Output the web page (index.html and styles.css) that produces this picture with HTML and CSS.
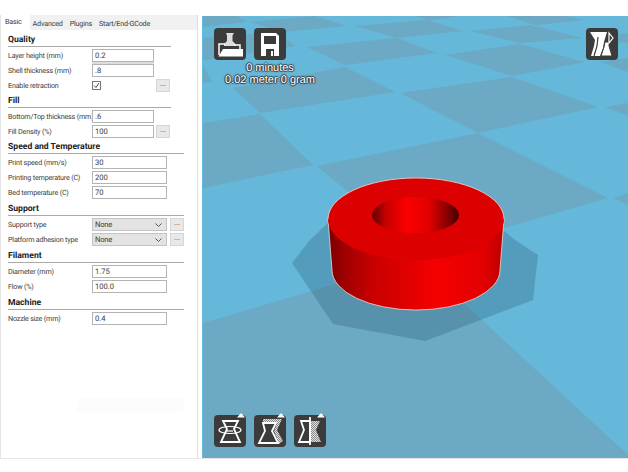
FILE: index.html
```html
<!DOCTYPE html>
<html lang="en">
<head>
    <meta charset="UTF-8">
    <title>Cura</title>
    <link rel="stylesheet" href="styles.css">
</head>
<body>
    <div class="app">
        <div class="panel">
            <div class="tabs">
                <span class="tab active">Basic</span>
                <span class="tab">Advanced</span>
                <span class="tab">Plugins</span>
                <span class="tab">Start/End-GCode</span>
            </div>
            <div class="settings">
                <div class="section">
                    <h2>Quality</h2>
                    <div class="row"><label>Layer height (mm)</label><input class="field band" value="0.2"></div>
                    <div class="row"><label>Shell thickness (mm)</label><input class="field" value=".8"></div>
                    <div class="row"><label>Enable retraction</label><span class="check-cell"><svg class="check" viewBox="0 0 9 9"><rect x=".5" y=".5" width="8" height="8" fill="#fff" stroke="#777"/><path d="M2 4.5l2 2 3-4.5" fill="none" stroke="#444"/></svg></span><button class="more">...</button></div>
                </div>
                <div class="section">
                    <h2>Fill</h2>
                    <div class="row"><label>Bottom/Top thickness (mm)</label><input class="field" value=".6"></div>
                    <div class="row"><label>Fill Density (%)</label><input class="field" value="100"><button class="more">...</button></div>
                </div>
                <div class="section wide">
                    <h2>Speed and Temperature</h2>
                    <div class="row"><label>Print speed (mm/s)</label><input class="field" value="30"></div>
                    <div class="row"><label>Printing temperature (C)</label><input class="field" value="200"></div>
                    <div class="row"><label>Bed temperature (C)</label><input class="field" value="70"></div>
                </div>
                <div class="section wide">
                    <h2>Support</h2>
                    <div class="row"><label>Support type</label><span class="field select">None<svg viewBox="0 0 7 4"><path d="M.5 .5l3 3 3-3" fill="none" stroke="#555"/></svg></span><button class="more">...</button></div>
                    <div class="row"><label>Platform adhesion type</label><span class="field select">None<svg viewBox="0 0 7 4"><path d="M.5 .5l3 3 3-3" fill="none" stroke="#555"/></svg></span><button class="more">...</button></div>
                </div>
                <div class="section wide">
                    <h2>Filament</h2>
                    <div class="row"><label>Diameter (mm)</label><input class="field" value="1.75"></div>
                    <div class="row"><label>Flow (%)</label><input class="field" value="100.0"></div>
                </div>
                <div class="section wide">
                    <h2>Machine</h2>
                    <div class="row"><label>Nozzle size (mm)</label><input class="field" value="0.4"></div>
                </div>
            </div>
            <div class="ghost"></div>
        </div>

        <div class="viewport">
            <svg class="scene" viewBox="202 16 426 442">
                <defs>
                    <linearGradient id="side">
                        <stop offset="0" stop-color="#7a0000"/>
                        <stop offset=".1" stop-color="#a00000"/>
                        <stop offset=".25" stop-color="#c80000"/>
                        <stop offset=".62" stop-color="#f60000"/>
                        <stop offset=".88" stop-color="#e40000"/>
                        <stop offset="1" stop-color="#b80000"/>
                    </linearGradient>
                    <linearGradient id="hole">
                        <stop offset="0" stop-color="#600000"/>
                        <stop offset=".16" stop-color="#c80000"/>
                        <stop offset=".4" stop-color="#fc0000"/>
                        <stop offset=".66" stop-color="#e00000"/>
                        <stop offset=".88" stop-color="#800000"/>
                        <stop offset="1" stop-color="#400000"/>
                    </linearGradient>
                    <pattern id="hatch" width="2" height="2" patternUnits="userSpaceOnUse">
                        <rect width="2" height="2" fill="#8a8a8a"/>
                        <rect width="1" height="1" fill="#e0e0e0"/>
                        <rect x="1" y="1" width="1" height="1" fill="#e0e0e0"/>
                    </pattern>
                </defs>
                <g fill="#6ba9c4">
                    <polygon points="203,16 237,16 247,22 203,27"/>
                    <polygon points="250,22 315,16 347,26 283,32"/>
                    <polygon points="415,16 460,16 440,19 427,20"/>
                    <polygon points="507,16 565,16 585,20 535,25"/>
                    <polygon points="203,38 277,32 295,46 203,60"/>
                    <polygon points="355,26 427,20 463,31 397,38"/>
                    <polygon points="470,31 530,25 582,38 520,43"/>
                    <polygon points="588,38 628,33 628,43"/>
                    <polygon points="307,47 397,38 437,53 345,65"/>
                    <polygon points="445,55 520,44 585,62 512,76"/>
                    <polygon points="600,62 628,58 628,72"/>
                    <polygon points="203,65 212,82 203,83"/>
                    <polygon points="233,88 345,67 395,92 260,113"/>
                    <polygon points="400,93 512,77 598,107 478,133"/>
                    <polygon points="605,107 628,103 628,116"/>
                    <polygon points="203,123 260,114 313,165 203,188"/>
                    <polygon points="317,166 478,133 608,198 420,252"/>
                    <polygon points="613,198 628,193 628,205"/>
                    <polygon points="203,323 417,260 628,455 628,458 203,458"/>
                </g>
                <polygon points="292,263 310,240 328,223 503,230 515,240 538,255 533,300 425,341 333,324" fill="#2f5f78" opacity=".32"/>
                <path d="M328 219L332 270A84 40 0 0 0 500 270L504 219Z" fill="url(#side)" stroke="#f6d8d0" stroke-width=".8"/>
                <ellipse cx="416" cy="219" rx="88" ry="41" fill="#dc0000"/>
                <path d="M328 219A88 41 0 0 1 504 219" fill="none" stroke="#f6d8d0" stroke-width=".8"/>
                <ellipse cx="415.5" cy="215" rx="43.5" ry="18" fill="url(#hole)"/>
            </svg>

            <div class="toolbar top-left">
                <svg class="tool" viewBox="0 0 32 32"><rect width="32" height="32" rx="4" fill="#3b3b3b"/><path d="M12 5h8l-1.500 2.500v5.500l3 3v2H10v-2l3-3V7.500z" fill="#ddd"/><path d="M5 27V16h6M20 17h6v4" fill="none" stroke="#fff" stroke-width="1.500"/><path d="M4.500 28.500L9 21h20v7.500z" fill="#fff"/></svg>
                <svg class="tool" viewBox="0 0 32 32"><rect width="32" height="32" rx="4" fill="#3b3b3b"/><path d="M7 5h15l3 3v20H7z" fill="#fff"/><path d="M10 8h12v8H10zM12 21h8v7h-8z" fill="#3b3b3b"/><path d="M17 23h2v5h-2z" fill="#fff"/></svg>
            </div>
            <div class="print-info">
                <div>0 minutes</div>
                <div>0.02 meter 0 gram</div>
            </div>
            <div class="toolbar top-right">
                <svg class="tool" viewBox="0 0 32 32"><rect width="32" height="32" rx="4" fill="#3b3b3b"/><path d="M4 4h17l-3 10-1 6-3 8H5l3-10 1-6z" fill="#fff"/><path d="M12 9l-1 9-3 10" fill="none" stroke="#3b3b3b" stroke-width="1.200"/><path d="M19 14h4v4l3 10H15l3-9z" fill="#fff" stroke="#3b3b3b"/><path d="M23 5l4 5-4 5z" fill="none" stroke="#fff" stroke-width="1.200"/></svg>
            </div>
            <div class="toolbar bottom-left">
                <svg class="tool" viewBox="0 0 32 32"><rect width="32" height="32" rx="4" fill="#3b3b3b"/><path d="M23 2.500l3.500-4h1l3.500 4z" fill="#fff"/><path d="M9 6h15l-4 8 6 13H7l6-13z" fill="none" stroke="#fff" stroke-width="1.800"/><ellipse cx="16" cy="15" rx="11" ry="3.500" fill="none" stroke="#fff" stroke-width="1.200"/><path d="M13 16h6" stroke="#fff" stroke-width="1.200"/></svg>
                <svg class="tool" viewBox="0 0 32 32"><rect width="32" height="32" rx="4" fill="#3b3b3b"/><path d="M23 2.500l3.500-4h1l3.500 4z" fill="#fff"/><path d="M9 4h19l-5 11 6 11-4 3-5-13 3-8H9z" fill="url(#hatch)"/><path d="M9 8h13l-4 8 6 12H5l6-12z" fill="none" stroke="#fff" stroke-width="1.800"/></svg>
                <svg class="tool" viewBox="0 0 32 32"><rect width="32" height="32" rx="4" fill="#3b3b3b"/><path d="M23 2.500l3.500-4h1l3.500 4z" fill="#fff"/><path d="M16 6h10l-4 9 5 12H16z" fill="url(#hatch)"/><path d="M7 6h9v21H5l5-12z" fill="none" stroke="#fff" stroke-width="1.800"/><path d="M16 2v28" stroke="#fff" stroke-width="1.800"/></svg>
            </div>
        </div>
    </div>
</body>
</html>
```
FILE: styles.css
```css
html, body {
    margin: 0;
    padding: 0;
    background: #fff;
}
body {
    font-family: Roboto, sans-serif;
    font-size: 7.2px;
    letter-spacing: -.2px;
    color: #3c3c3c;
    height: 472px;
    overflow: hidden;
    text-rendering: geometricPrecision;
}
.app {
    display: flex;
    height: 443px;
    margin-top: 15px;
    border-bottom: 1px solid #e6e6e6;
}
.panel {
    position: relative;
    width: 198px;
    background: #fff;
    border-left: 1px solid #e4e4e4;
    border-right: 1px solid #f0d8da;
    box-sizing: border-box;
}
.tabs {
    display: flex;
    height: 15px;
    background: #f1f1f1;
}
.tab {
    padding: 4px 3px 0;
    margin-right: 1px;
    line-height: 10px;
}
.tab.active {
    background: #fff;
    margin-right: 0;
    padding: 2px 8px 0 4px;
}
.settings {
    padding: 4px 0 0 7px;
}
.section {
    width: 163px;
    margin-top: 2px;
}
.section:first-child {
    margin-top: 0;
}
.wide {
    width: 176px;
}
.wide + .wide {
    margin-top: 3px;
}
h2 {
    margin: 0 0 1px;
    height: 12px;
    line-height: 13px;
    font-size: 8.6px;
    letter-spacing: 0;
    font-weight: 700;
    color: #222;
    border-bottom: 1px solid #aaa;
}
.row {
    display: flex;
    align-items: flex-start;
    height: 15px;
    padding-top: 1px;
    box-sizing: border-box;
}
.row label {
    width: 84px;
    flex: none;
    line-height: 13px;
    white-space: nowrap;
}
.field {
    width: 62px;
    height: 13px;
    padding: 0 2px;
    border: 1px solid #b4b4b4;
    box-sizing: border-box;
    font-family: inherit;
    font-size: 7.6px;
    color: #3c3c3c;
    background: #fff;
    outline: none;
    text-rendering: geometricPrecision;
}
.wide .field {
    width: 75px;
}
.band {
    box-shadow: 0 2px 0 #ddd;
}
.select {
    display: flex;
    align-items: center;
    justify-content: space-between;
    background: #e3e3e3;
    border-color: #c4c4c4;
    padding-right: 4px;
}
.select svg {
    width: 7px;
    height: 4px;
}
.check-cell {
    width: 62px;
    height: 13px;
    display: flex;
    align-items: center;
}
.check {
    width: 9px;
    height: 9px;
}
.more {
    width: 14px;
    height: 13px;
    margin-left: 2px;
    padding: 0 0 3px;
    border: 1px solid #d6d6d6;
    background: #e8e8e8;
    font-size: 7px;
    line-height: 8px;
    color: #333;
}
.wide .more {
    margin-left: 3px;
}
.ghost {
    position: absolute;
    left: 76px;
    top: 383px;
    width: 107px;
    height: 14px;
    background: #fcfcfd;
    border-radius: 3px;
}
.viewport {
    position: relative;
    flex: 1;
    margin-left: 4px;
    margin-top: 1px;
    overflow: hidden;
    background: #65b8da;
}
.scene {
    position: absolute;
    left: 0;
    top: 0;
    width: 426px;
    height: 442px;
}
.toolbar {
    position: absolute;
    display: flex;
    gap: 8px;
}
.top-left {
    left: 12px;
    top: 12px;
}
.top-right {
    right: 10px;
    top: 12px;
}
.bottom-left {
    left: 12px;
    bottom: 11px;
}
.tool {
    width: 32px;
    height: 32px;
    overflow: visible;
}
.print-info {
    position: absolute;
    left: 12px;
    top: 46px;
    width: 112px;
    text-align: center;
    font-family: "Liberation Sans", sans-serif;
    font-size: 11px;
    letter-spacing: 0;
    line-height: 12px;
    color: #fff;
    text-shadow: 1px 0 1px #333, -1px 0 1px #333, 0 1px 1px #333, 0 -1px 1px #333;
}
```
